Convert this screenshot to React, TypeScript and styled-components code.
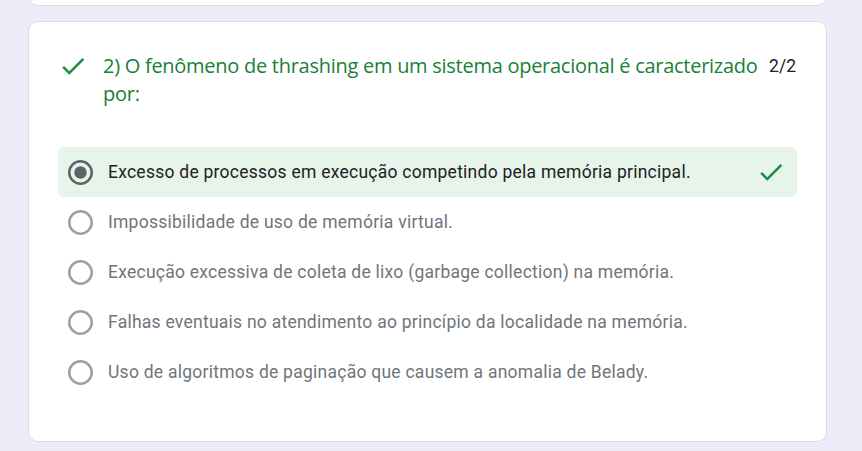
import React from "react";
import styled, { createGlobalStyle } from "styled-components";

const Global = createGlobalStyle`
  html, body { margin: 0; padding: 0; background: #f0ebf8; }
  body { font-family: Roboto, "Liberation Sans", sans-serif; }
  #root { width: 862px; height: 451px; }
`;

const Page = styled.div`
  width: 862px;
  height: 451px;
  overflow: hidden;
  box-sizing: border-box;
  padding-left: 28px;
  display: flex;
  flex-direction: column;
  gap: 15px;
`;

const PrevCard = styled.div`
  width: 799px;
  height: 40px;
  margin-top: -34px;
  box-sizing: border-box;
  background: #fff;
  border: 1px solid #dadce0;
  border-radius: 10px;
  flex-shrink: 0;
`;

const Card = styled.div`
  width: 799px;
  box-sizing: border-box;
  background: #fff;
  border: 1px solid #dadce0;
  border-radius: 10px;
  padding: 30px 29px 44px 29px;
  flex-shrink: 0;
`;

const TitleRow = styled.div`
  display: flex;
  align-items: flex-start;
`;

const TitleIcon = styled.div`
  width: 30px;
  height: 28px;
  flex-shrink: 0;
  margin-right: 15px;
  display: flex;
  align-items: center;
  justify-content: center;
`;

const TitleText = styled.div`
  flex: 1;
  font-family: "Open Sans", Roboto, sans-serif;
  font-size: 20px;
  line-height: 28px;
  color: #188038;
  letter-spacing: -0.27px;
`;

const Score = styled.div`
  font-family: Roboto, sans-serif;
  font-size: 17.5px;
  line-height: 28px;
  color: #202124;
  margin-left: 5px;
  margin-right: 1px;
  flex-shrink: 0;
`;

const OptionList = styled.div`
  margin-top: 39px;
  display: flex;
  flex-direction: column;
`;

const OptionRow = styled.div<{ $correct?: boolean }>`
  height: 50px;
  box-sizing: border-box;
  display: flex;
  align-items: center;
  padding: 0 11px 0 10px;
  border-radius: 6px;
  background: ${(p) => (p.$correct ? "#e6f4ea" : "transparent")};
`;

const OptionLabel = styled.span<{ $selected?: boolean }>`
  margin-left: 15px;
  font-family: Roboto, sans-serif;
  font-size: 17.5px;
  letter-spacing: 0.25px;
  color: ${(p) => (p.$selected ? "#202124" : "#70757a")};
  flex: 1;
`;

const CheckBox = styled.div`
  width: 30px;
  height: 30px;
  display: flex;
  align-items: center;
  justify-content: center;
  flex-shrink: 0;
`;

const Check = ({ size = 30 }: { size?: number }) => (
  <svg width={size} height={size} viewBox="0 0 24 24">
    <path fill="#1e8e3e" d="M9 16.17L4.83 12l-1.42 1.41L9 19 21 7l-1.41-1.41z" />
  </svg>
);

const Radio = ({ selected }: { selected?: boolean }) => (
  <svg width="25" height="25" viewBox="0 0 25 25">
    <circle
      cx="12.5"
      cy="12.5"
      r="11.25"
      fill="none"
      stroke={selected ? "#5f6368" : "#9aa0a6"}
      strokeWidth="2.5"
    />
    {selected && <circle cx="12.5" cy="12.5" r="6.25" fill="#5f6368" />}
  </svg>
);

const options = [
  { text: "Excesso de processos em execução competindo pela memória principal.", selected: true, correct: true },
  { text: "Impossibilidade de uso de memória virtual." },
  { text: "Execução excessiva de coleta de lixo (garbage collection) na memória." },
  { text: "Falhas eventuais no atendimento ao princípio da localidade na memória." },
  { text: "Uso de algoritmos de paginação que causem a anomalia de Belady." },
];

export default function App() {
  return (
    <>
      <Global />
      <Page>
        <PrevCard />
        <Card>
          <TitleRow>
            <TitleIcon>
              <Check />
            </TitleIcon>
            <TitleText>
              2) O fenômeno de thrashing em um sistema operacional é caracterizado por:
            </TitleText>
            <Score>2/2</Score>
          </TitleRow>
          <OptionList>
            {options.map((o) => (
              <OptionRow key={o.text} $correct={o.correct}>
                <Radio selected={o.selected} />
                <OptionLabel $selected={o.selected}>{o.text}</OptionLabel>
                {o.correct && (
                  <CheckBox>
                    <Check />
                  </CheckBox>
                )}
              </OptionRow>
            ))}
          </OptionList>
        </Card>
      </Page>
    </>
  );
}
